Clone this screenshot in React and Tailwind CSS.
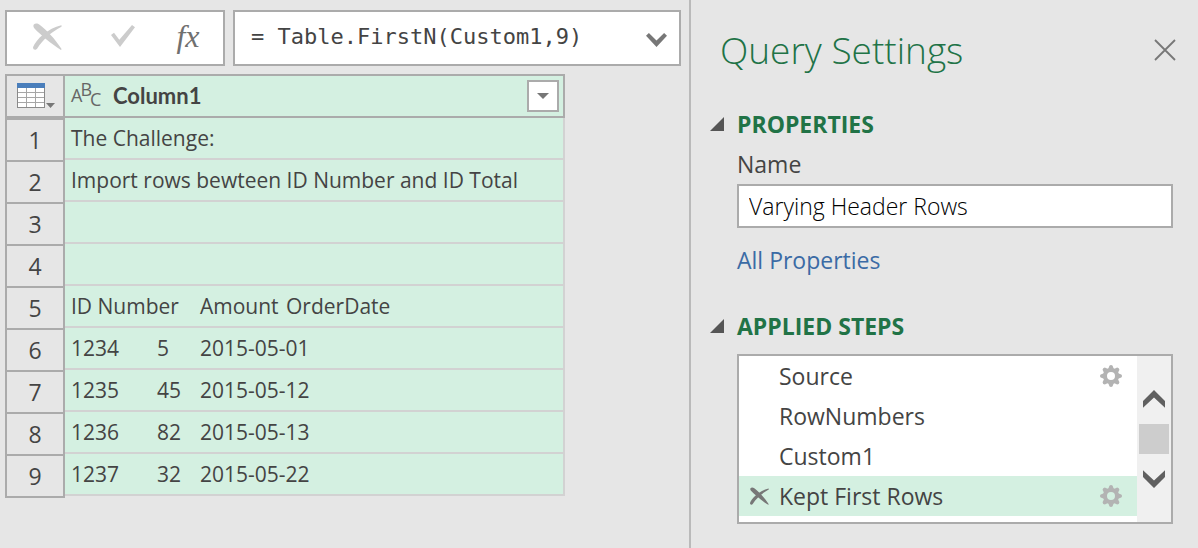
import React, { useState } from "react";

const ROWS = [
  "The Challenge:",
  "Import rows bewteen ID Number and ID Total",
  "",
  "",
  "ID Number\tAmount\tOrderDate",
  "1234\t5\t2015-05-01",
  "1235\t45\t2015-05-12",
  "1236\t82\t2015-05-13",
  "1237\t32\t2015-05-22",
];

const STEPS = [
  { name: "Source", editable: true },
  { name: "RowNumbers", editable: false },
  { name: "Custom1", editable: false },
  { name: "Kept First Rows", editable: true },
];

function CrossIcon({ className }) {
  return (
    <svg viewBox="0 0 29 27" className={className} fill="currentColor" aria-hidden="true">
      <path d="M.8 1.6C2.3 -.2 4.8 .3 6.6 1.8C14 7.4 22 16 28.4 25.8C28.6 26.8 28 27.2 27.2 26.6C18.5 21 8 12.4 1.5 5.6C.4 4.4 0 2.7 .8 1.6Z" />
      <path d="M28.3 2.2C29 2.8 28.8 3.6 28 4C18.5 9 10 16.4 4.4 25.2C3.2 27.4 0 27.3 0 24.2C3 16.4 15 5 28.3 2.2Z" />
    </svg>
  );
}

function CheckIcon() {
  return (
    <svg viewBox="0 0 24 22" className="h-[22px] w-6" fill="currentColor" aria-hidden="true">
      <path d="M0 10L3 7.7L8.3 14.7L21 0L24 2.3L9 22Z" />
    </svg>
  );
}

function TableIcon() {
  return (
    <svg viewBox="0 0 39 26" className="h-[26px] w-[39px]" aria-hidden="true">
      <rect x=".5" y=".5" width="27" height="24" fill="#fff" stroke="#8a8a8a" />
      <path d="M9.5 5V24M18.5 5V24M1 9.5H27M1 14.5H27M1 19.5H27" stroke="#a6a6a6" fill="none" />
      <rect width="28" height="5" fill="#4a7ebb" />
      <path d="M29 20H38L33.5 25Z" fill="#777" />
    </svg>
  );
}

function GearIcon() {
  const angles = [0, 45, 90, 135, 180, 225, 270, 315];
  return (
    <svg viewBox="-11 -11 22 22" className="size-[22px]" aria-hidden="true">
      <circle r="6" fill="none" stroke="#b3b3b3" strokeWidth="4" />
      {angles.map((a) => (
        <path key={a} d="M-2.8 -7L-1.6 -10.3Q0 -11.7 1.6 -10.3L2.8 -7Z" fill="#b3b3b3" transform={`rotate(${a})`} />
      ))}
    </svg>
  );
}

function FormulaBar() {
  const [formula, setFormula] = useState("= Table.FirstN(Custom1,9)");
  return (
    <div className="flex gap-2">
      <div className="flex h-14 w-[220px] shrink-0 border-2 border-[#ababab] bg-white text-[#cccccc]">
        <button aria-label="Cancel" className="flex w-20 items-center justify-center pb-1">
          <CrossIcon className="h-[27px] w-[29px]" />
        </button>
        <button aria-label="Enter" className="flex w-[72px] items-center justify-center pb-1">
          <CheckIcon />
        </button>
        <button
          aria-label="Insert function"
          className="flex w-[58px] items-center justify-center pb-1 font-['Liberation_Serif',serif] text-[32px] leading-none text-[#707070] italic"
        >
          fx
        </button>
      </div>
      <div className="flex h-14 min-w-0 flex-1 border-2 border-[#ababab] bg-white">
        <input
          aria-label="Formula"
          value={formula}
          onChange={(e) => setFormula(e.target.value)}
          className="min-w-0 flex-1 pb-1 pl-4 font-['DejaVu_Sans_Mono',monospace] text-[22px] text-[#444] outline-none"
        />
        <button aria-label="Expand formula bar" className="flex w-[46px] items-center justify-center pt-1 text-[#777]">
          <svg viewBox="0 0 21 14" className="h-3.5 w-[21px]" fill="currentColor" aria-hidden="true">
            <path d="M0 2.7L2.9 0L10.5 7.6L18.1 0L21 2.7L10.5 14Z" />
          </svg>
        </button>
      </div>
    </div>
  );
}

function DataGrid() {
  return (
    <table className="w-[560px] table-fixed border-separate border-spacing-0 text-left">
      <colgroup>
        <col className="w-[60px]" />
        <col />
      </colgroup>
      <thead>
        <tr className="h-11">
          <th className="border-2 border-[#ababab] p-0">
            <button aria-label="Table options" className="flex w-full pl-2.5">
              <TableIcon />
            </button>
          </th>
          <th className="border-2 border-l-0 border-[#ababab] bg-[#d4f0e1] p-0">
            <div className="flex items-center pr-1 pl-1.5">
              <button
                aria-label="Column type: text"
                className="flex h-7 w-[42px] items-start font-['Open_Sans',sans-serif] text-[18px] leading-none font-medium text-[#666]"
              >
                <span className="pt-1">A</span>
                <span className="-ml-0.5 -mt-0.5">B</span>
                <span className="-ml-0.5 pt-2">C</span>
              </button>
              <span className="flex-1 font-['Lato',sans-serif] text-[22px] leading-8 font-bold text-[#444]">Column1</span>
              <button
                aria-label="Filter Column1"
                className="flex size-8 items-center justify-center border-2 border-[#ababab] bg-white"
              >
                <svg viewBox="0 0 12 6" className="h-1.5 w-3" aria-hidden="true">
                  <path d="M0 0H12L6 6Z" fill="#777" />
                </svg>
              </button>
            </div>
          </th>
        </tr>
      </thead>
      <tbody>
        {ROWS.map((text, i) => (
          <tr key={i} className="group h-[42px]">
            <th
              scope="row"
              className="border-x-2 border-t-2 border-[#ababab] p-0 text-center font-['Open_Sans',sans-serif] text-[23px] leading-8 font-normal text-[#444] group-last:shadow-[0_2px_0_#ababab]"
            >
              {i + 1}
            </th>
            <td className="border-r-2 border-b-2 border-[#d2d2d2] bg-[#d4f0e1] py-0 pr-0 pl-1.5 font-['Open_Sans',sans-serif] text-[21px] leading-8 whitespace-pre text-[#444] [tab-size:43px]">
              {text}
            </td>
          </tr>
        ))}
      </tbody>
    </table>
  );
}

function SectionHeading({ children }) {
  return (
    <h2>
      <button className="flex items-center gap-[13px] text-[23px] leading-8 font-bold text-[#217346]">
        <svg viewBox="0 0 14 14" className="size-3.5" aria-hidden="true">
          <path d="M14 0V14H0Z" fill="#555" />
        </svg>
        {children}
      </button>
    </h2>
  );
}

function StepList() {
  const [selected, setSelected] = useState(3);
  return (
    <div className="flex h-[170px] border-2 border-[#ababab] bg-white">
      <ul className="min-w-0 flex-1">
        {STEPS.map((step, i) => (
          <li key={step.name} className={`flex h-10 items-center pr-[15px] pl-[11px] ${i === selected ? "bg-[#d4f0e1]" : ""}`}>
            <div className="w-[29px] text-[#777]">
              {i === selected && (
                <button aria-label="Delete step" className="flex">
                  <CrossIcon className="h-[18px] w-[19px]" />
                </button>
              )}
            </div>
            <button className="flex-1 text-left leading-8" onClick={() => setSelected(i)}>
              {step.name}
            </button>
            {step.editable && (
              <button aria-label={`Edit ${step.name}`} className="flex">
                <GearIcon />
              </button>
            )}
          </li>
        ))}
      </ul>
      <div className="flex w-[34px] flex-col items-center bg-[#f0f0f0] pt-[34px] text-[#606060]">
        <button aria-label="Scroll up" className="flex">
          <svg viewBox="0 0 22 18" className="h-[18px] w-[22px]" fill="currentColor" aria-hidden="true">
            <path d="M0 11L11 0L22 11V17.8L11 7.6L0 17.8Z" />
          </svg>
        </button>
        <div className="my-4 h-[30px] w-[30px] bg-[#cdcdcd]" />
        <button aria-label="Scroll down" className="flex">
          <svg viewBox="0 0 22 18" className="h-[18px] w-[22px]" fill="currentColor" aria-hidden="true">
            <path d="M0 7L11 18L22 7V.2L11 10.4L0 .2Z" />
          </svg>
        </button>
      </div>
    </div>
  );
}

function QuerySettings() {
  const [name, setName] = useState("Varying Header Rows");
  return (
    <aside className="w-[509px] shrink-0 border-l-2 border-[#bababa] pt-6 pr-[25px] pl-[19px] font-['Open_Sans',sans-serif] text-[23px] text-[#444]">
      <div className="flex items-center justify-between pl-2.5">
        <h1 className="text-[37px] leading-[52px] font-light text-[#217346]">Query Settings</h1>
        <button aria-label="Close" className="-mr-[3px]">
          <svg viewBox="0 0 22 22" className="size-[22px]" aria-hidden="true">
            <path d="M1 1L21 21M21 1L1 21" stroke="#777" strokeWidth="1.8" />
          </svg>
        </button>
      </div>
      <section className="mt-8">
        <SectionHeading>PROPERTIES</SectionHeading>
        <div className="mt-2 pl-[27px]">
          <label htmlFor="query-name" className="block leading-8">
            Name
          </label>
          <input
            id="query-name"
            value={name}
            onChange={(e) => setName(e.target.value)}
            className="mt-1 h-11 w-full border-2 border-[#ababab] bg-white px-2.5 font-light text-black outline-none"
          />
          <a href="#properties" className="mt-4 block leading-8 text-[#3b6ba5]">
            All Properties
          </a>
        </div>
      </section>
      <section className="mt-[34px]">
        <SectionHeading>APPLIED STEPS</SectionHeading>
        <div className="mt-3 pl-[27px]">
          <StepList />
        </div>
      </section>
    </aside>
  );
}

export default function App() {
  return (
    <div className="flex min-h-screen bg-[#e6e6e6]">
      <main className="flex min-w-0 flex-1 flex-col gap-2 pt-2.5 pr-2 pl-[5px]">
        <FormulaBar />
        <DataGrid />
      </main>
      <QuerySettings />
    </div>
  );
}
